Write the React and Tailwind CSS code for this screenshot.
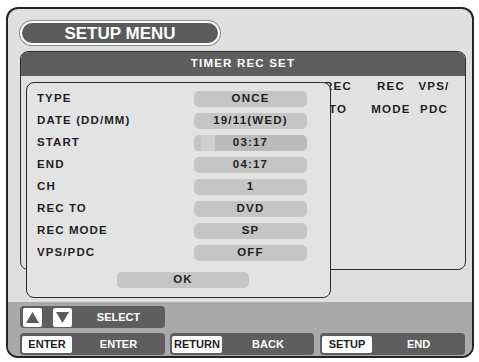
import React from 'react';

const rows = [
    { label: 'TYPE', value: 'ONCE' },
    { label: 'DATE (DD/MM)', value: '19/11(WED)' },
    { label: 'START', value: '03:17', active: true },
    { label: 'END', value: '04:17' },
    { label: 'CH', value: '1' },
    { label: 'REC TO', value: 'DVD' },
    { label: 'REC MODE', value: 'SP' },
    { label: 'VPS/PDC', value: 'OFF' },
];

const columns = [
    { top: 'REC', bottom: 'TO', w: 'w-[52px]' },
    { top: 'REC', bottom: 'MODE', w: 'w-[54px]' },
    { top: 'VPS/', bottom: 'PDC', w: 'w-[32px]' },
];

function Arrow({ up }) {
    return (
        <div className="w-[19px] h-[19px] bg-white rounded-[2px] flex items-center justify-center">
            <svg width="19" height="19" viewBox="0 0 19 19">
                <polygon points={up ? '3,15 16,15 9.5,4' : '3,4 16,4 9.5,15'} fill="#5a5a5a" />
            </svg>
        </div>
    );
}

function KeyBox({ keyName, action, w }) {
    return (
        <div className={`${w} h-[22px] bg-[#5e5e5e] rounded-[4px] flex items-center pl-[2px]`}>
            <div className="w-[50px] h-[17px] bg-white rounded-[2px] flex items-center justify-center text-[11px] font-bold text-[#1e1e1e]">
                {keyName}
            </div>
            <div className="flex-1 text-center text-[11px] font-bold text-white">{action}</div>
        </div>
    );
}

export default function App() {
    return (
        <div className="w-[479px] h-[362px] bg-white pt-[7px] pl-[6px] font-['Liberation_Sans',Arial,sans-serif]">
            <div className="w-[468px] h-[351px] border-2 border-[#242424] rounded-[12px] overflow-hidden bg-[#dfdfdf] flex flex-col">
                <div className="h-[293px] relative pl-[12px] pt-[12px]">
                    {/* title pill */}
                    <div className="w-[200px] h-[24px] rounded-full bg-[#5b5b5b] border-2 border-white ring-1 ring-[#8a8a8a] flex items-center justify-center text-white text-[17px] font-bold leading-none">
                        SETUP MENU
                    </div>

                    {/* timer list panel */}
                    <div className="mt-[6px] w-[446px] h-[219px] rounded-[8px] border-[1.5px] border-[#2e2e2e] bg-[#e1e1e1] overflow-hidden">
                        <div className="h-[24px] bg-[#5e5e5e] flex items-center justify-center text-white text-[11.5px] font-bold tracking-[1.2px]">
                            TIMER REC SET
                        </div>
                        <div className="flex justify-end pr-[15px] pt-[3px]">
                            {columns.map((c, i) => (
                                <div key={i} className={`${c.w} flex flex-col items-center gap-[9px] text-[11.5px] leading-[14px] font-bold tracking-[1.2px] text-[#1f1f1f]`}>
                                    <span className="whitespace-nowrap">{c.top}</span>
                                    <span className="whitespace-nowrap">{c.bottom}</span>
                                </div>
                            ))}
                        </div>
                    </div>

                    {/* timer dialog */}
                    <div className="absolute left-[18px] top-[73px] w-[305px] h-[216px] rounded-[8px] border-[1.5px] border-[#2a2a2a] bg-[#e3e3e3] pt-[7.5px] pl-[10px] flex flex-col">
                        <div className="flex flex-col gap-[6px]">
                            {rows.map((r) => (
                                <div key={r.label} className="flex items-center h-[16px]">
                                    <div className="w-[157px] text-[11.5px] font-bold tracking-[1.1px] text-[#1f1f1f]">{r.label}</div>
                                    <div className={`relative w-[113px] h-[16px] rounded-[5px] overflow-hidden flex items-center justify-center ${r.active ? 'bg-[#bababa]' : 'bg-[#c5c5c5]'}`}>
                                        {r.active && (
                                            <div className="absolute left-0 top-0 h-full flex">
                                                <div className="w-[7px] bg-[#c4c4c4]" />
                                                <div className="w-[14px] bg-[#cfcfcf]" />
                                            </div>
                                        )}
                                        <span className="relative text-[11.5px] font-bold tracking-[1.2px] text-[#1f1f1f]">{r.value}</span>
                                    </div>
                                </div>
                            ))}
                        </div>
                        <div className="mt-[11px] ml-[80px] w-[132px] h-[16px] rounded-[5px] bg-[#c5c5c5] flex items-center justify-center text-[11.5px] font-bold tracking-[1.2px] text-[#1f1f1f]">
                            OK
                        </div>
                    </div>
                </div>

                {/* key guide */}
                <div className="flex-1 bg-[#a9a9a9] pt-[4px] pl-[12px] flex flex-col gap-[5px]">
                    <div className="w-[145px] h-[22px] bg-[#5e5e5e] rounded-[4px] flex items-center pl-[3px]">
                        <Arrow up />
                        <div className="ml-[11px]">
                            <Arrow />
                        </div>
                        <div className="flex-1 text-center text-[11px] font-bold text-white">SELECT</div>
                    </div>
                    <div className="flex">
                        <KeyBox keyName="ENTER" action="ENTER" w="w-[145px]" />
                        <div className="ml-[5px]">
                            <KeyBox keyName="RETURN" action="BACK" w="w-[144px]" />
                        </div>
                        <div className="ml-[6px]">
                            <KeyBox keyName="SETUP" action="END" w="w-[145px]" />
                        </div>
                    </div>
                </div>
            </div>
        </div>
    );
}
